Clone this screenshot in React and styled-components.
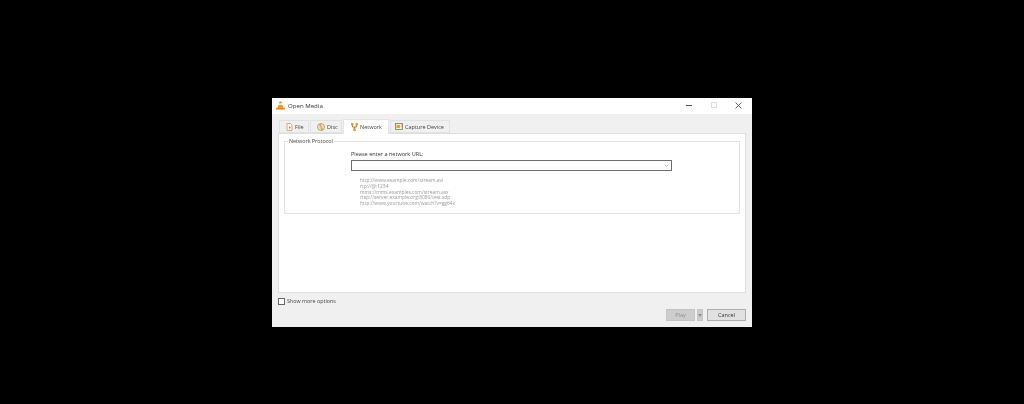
import React from "react";
import styled, { createGlobalStyle } from "styled-components";

const Global = createGlobalStyle`
  html, body { margin: 0; padding: 0; background: #000; }
  #root { width: 1024px; height: 404px; overflow: hidden; }
`;
const Desktop = styled.div`
  width: 1024px; height: 404px; box-sizing: border-box; background: #000;
  padding: 98px 0 0 272px;
  font-family: "Open Sans", "Noto Sans", sans-serif; color: #333;
`;
const Window = styled.div`
  width: 480px; height: 229px; background: #f0f0f0; display: flex; flex-direction: column;
  filter: blur(0.3px);
`;
const TitleBar = styled.div`
  box-sizing: border-box; height: 16px; flex: none; background: #fff; display: flex; align-items: center;
  padding: 0 0 2px 4px;
`;
const Title = styled.span`
  font-size: 6.1px; margin-left: 3px; flex: 1; color: #333;
`;
const WinButton = styled.div`
  width: 25px; height: 14px; display: flex; align-items: center; justify-content: center; margin-right: ${p => p.$mr || 0}px;
`;
const Body = styled.div`
  flex: 1; display: flex; flex-direction: column; padding: 5px 6px 6px 6px;
`;
const Tabs = styled.div`
  display: flex; align-items: flex-end; height: 14px; padding-left: 1px; flex: none; position: relative; z-index: 1;
`;
const Tab = styled.div`
  box-sizing: border-box; display: flex; align-items: center; gap: ${p => p.$iconGap}px;
  width: ${p => p.$w}px; height: ${p => p.$active ? 15 : 13}px; padding-left: ${p => p.$pad}px;
  background: ${p => p.$active ? "#fff" : "#f0f0f0"};
  border: 1px solid ${p => p.$active ? "#e4e4e4" : "#e2e2e2"};
  border-bottom: ${p => p.$active ? "none" : "1px solid #e2e2e2"};
  margin-right: ${p => p.$gap || 0}px;
  font-size: 5.5px; color: #444; white-space: nowrap;
  margin-bottom: ${p => p.$active ? -1 : 0}px;
`;
const Panel = styled.div`
  box-sizing: border-box; height: 160px; background: #fff; border: 1px solid #dfdfdf; padding: 7px 5px 0 5px; flex: none;
`;
const Group = styled.div`
  box-sizing: border-box; height: 73px; border: 1px solid #e2e2e2; position: relative;
  display: flex; flex-direction: column; padding: 8px 0 0 66px;
`;
const Legend = styled.span`
  position: absolute; left: 3px; top: -4px; background: #fff; padding: 0 1px; font-size: 5.4px; line-height: 7px; color: #444;
`;
const FieldLabel = styled.div`
  font-size: 5.55px; line-height: 8px; height: 10px; color: #333;
`;
const Combo = styled.div`
  box-sizing: border-box; width: 321px; height: 11px; border: 1px solid #6e6e6e; background: #fff;
  display: flex; align-items: center; justify-content: flex-end; padding-right: 2px;
`;
const Hints = styled.div`
  margin: 7px 0 0 9px; font-size: 4.9px; line-height: 5.8px; color: #999; white-space: nowrap;
`;
const Footer = styled.div`
  flex: 1; display: flex; flex-direction: column; justify-content: space-between;
`;
const OptionRow = styled.label`
  display: flex; align-items: center; gap: 2px; margin-top: 4px; font-size: 5.4px; color: #444;
`;
const Box = styled.span`
  box-sizing: border-box; width: 7px; height: 7px; border: 1px solid #666; background: #fff; display: block;
`;
const Actions = styled.div`
  display: flex; justify-content: flex-end; align-items: center;
`;
const Btn = styled.div`
  box-sizing: border-box; height: 12px; width: ${p => p.$w}px; margin-left: ${p => p.$ml || 0}px;
  display: flex; align-items: center; justify-content: center; font-size: 5.5px;
  background: ${p => p.$disabled ? "#cdcdcd" : "#e1e1e1"}; color: ${p => p.$disabled ? "#8f8f8f" : "#333"};
  border: 1px solid ${p => p.$disabled ? "#c4c4c4" : "#adadad"};
`;

const Cone = () => (
  <svg width="9" height="9" viewBox="0 0 18 18">
    <path d="M7 1h4l1.200 4H5.800z" fill="#f08a12" />
    <path d="M5.800 5h6.400l1 3.500H4.800z" fill="#f4e6d0" />
    <path d="M4.800 8.500h8.400l1.300 4.500h-11z" fill="#f08a12" />
    <path d="M1 13h16l1 4H0z" fill="#e9820c" />
  </svg>
);
const FileIcon = () => (
  <svg width="7" height="8" viewBox="0 0 14 16">
    <path d="M2 1h7l3 3v11H2z" fill="#fdf6ea" stroke="#b89a70" strokeWidth="1.500" />
    <path d="M6 6l4 3-4 3z" fill="#f08a12" />
  </svg>
);
const DiscIcon = () => (
  <svg width="8" height="8" viewBox="0 0 16 16">
    <circle cx="8" cy="8" r="7" fill="#f6e3c2" stroke="#8a7a60" strokeWidth="1.200" />
    <path d="M8 8L3 3a7 7 0 0 1 5-2z" fill="#f0a030" />
    <path d="M8 8l5 5a7 7 0 0 1-5 2z" fill="#f0a030" />
    <circle cx="8" cy="8" r="2" fill="#fff" stroke="#8a7a60" />
  </svg>
);
const NetIcon = () => (
  <svg width="7" height="8" viewBox="0 0 14 16">
    <path d="M3 4v4h8V4M7 8v4" fill="none" stroke="#8a6a30" strokeWidth="1.600" />
    <rect x="0" y="0" width="5" height="5" fill="#eda020" />
    <rect x="9" y="0" width="5" height="5" fill="#eda020" />
    <rect x="4.500" y="11" width="5" height="5" fill="#eda020" />
  </svg>
);
const CaptureIcon = () => (
  <svg width="8" height="7" viewBox="0 0 16 14">
    <rect x="1" y="1" width="14" height="12" fill="#f7ecd6" stroke="#77705f" strokeWidth="1.500" />
    <rect x="3" y="4" width="7" height="6" fill="#e8a030" />
    <path d="M12 4h2M12 7h2" stroke="#77705f" />
  </svg>
);

export default function App() {
  return (
    <Desktop>
      <Global />
      <Window>
        <TitleBar>
          <Cone />
          <Title>Open Media</Title>
          <WinButton>
            <svg width="6" height="1" viewBox="0 0 6 1"><rect width="6" height="1" fill="#555" /></svg>
          </WinButton>
          <WinButton>
            <svg width="6" height="6" viewBox="0 0 6 6"><rect x=".5" y=".5" width="5" height="5" fill="none" stroke="#dcdcdc" /></svg>
          </WinButton>
          <WinButton $mr={1}>
            <svg width="7" height="7" viewBox="0 0 7 7"><path d="M.5.5l6 6M6.500.5l-6 6" stroke="#555" strokeWidth=".9" /></svg>
          </WinButton>
        </TitleBar>
        <Body>
          <Tabs>
            <Tab $w={30} $gap={1} $pad={6} $iconGap={2}><FileIcon />File</Tab>
            <Tab $w={32} $gap={1} $pad={6} $iconGap={2}><DiscIcon />Disc</Tab>
            <Tab $w={46} $gap={1} $pad={7} $iconGap={2} $active><NetIcon />Network</Tab>
            <Tab $w={60} $pad={4} $iconGap={2}><CaptureIcon />Capture Device</Tab>
          </Tabs>
          <Panel>
            <Group>
              <Legend>Network Protocol</Legend>
              <FieldLabel>Please enter a network URL:</FieldLabel>
              <Combo>
                <svg width="5" height="3" viewBox="0 0 6 4"><path d="M.5.800L3 3.200 5.500.800" fill="none" stroke="#888" strokeWidth=".8" /></svg>
              </Combo>
              <Hints>
                <div>http://www.example.com/stream.avi</div>
                <div>rtp://@:1234</div>
                <div>mms://mms.examples.com/stream.asx</div>
                <div>rtsp://server.example.org:8080/test.sdp</div>
                <div>http://www.yourtube.com/watch?v=gg64x</div>
              </Hints>
            </Group>
          </Panel>
          <Footer>
            <OptionRow><Box />Show more options</OptionRow>
            <Actions>
              <Btn $w={29} $disabled>Play</Btn>
              <Btn $w={6} $ml={2} $disabled>
                <svg width="4" height="3" viewBox="0 0 4 3"><path d="M0 0h4L2 3z" fill="#8f8f8f" /></svg>
              </Btn>
              <Btn $w={39} $ml={4}>Cancel</Btn>
            </Actions>
          </Footer>
        </Body>
      </Window>
    </Desktop>
  );
}
